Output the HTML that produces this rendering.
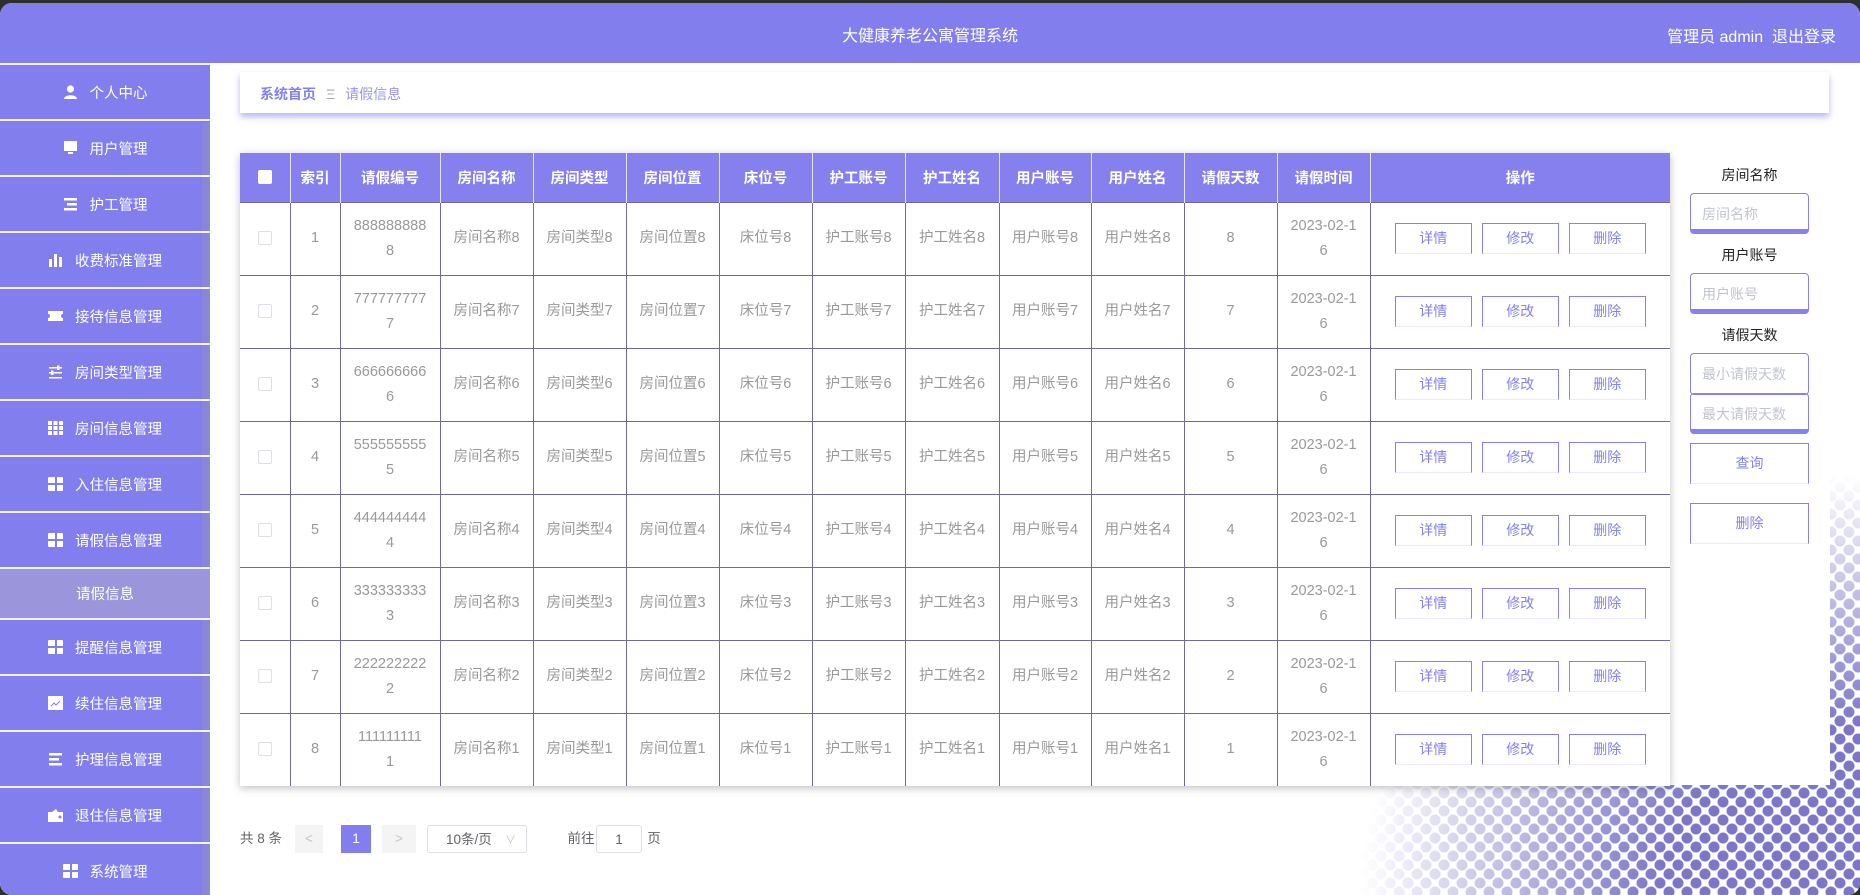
<!DOCTYPE html>
<html><head><meta charset="utf-8"><style>
*{box-sizing:border-box;margin:0;padding:0}
body{width:1860px;height:895px;background:#2e2e2e;font-family:"Liberation Sans","Noto Sans CJK SC",sans-serif;overflow:hidden;position:relative}
#page{position:absolute;left:0;top:3px;width:1860px;height:892px;background:#fff;border-radius:12px 12px 12px 12px;overflow:hidden}
#hdr{position:absolute;left:0;top:0;width:1860px;height:60px;background:#827eee;color:#fff}
#hdr .t{position:absolute;left:0;width:1860px;text-align:center;top:19px;font-size:16px}
#hdr .r{position:absolute;right:24px;top:20px;font-size:16px}
#side{position:absolute;left:0;top:60px;width:210px;height:832px;background:#827eee;border-radius:0 0 0 12px;overflow:hidden}
#side .strip{position:absolute;right:0;top:60px;width:8px;height:780px;background:#8a86d8}
.it{height:56px;border-top:2px solid #f4f3ff;color:#fff;font-size:14.5px;display:flex;align-items:center;justify-content:center;gap:12px;position:relative}
.it.act{background:#9b96dc}
.ic{width:15px;height:14px;display:inline-block;position:relative}
.g4{background:linear-gradient(#827eee,#827eee) 7px 0/2px 14px no-repeat,linear-gradient(#827eee,#827eee) 0 6px/15px 2px no-repeat,#fff;border-radius:1px}
#dots{position:absolute;right:0;bottom:0;width:560px;height:480px;
background:radial-gradient(circle,#7d76c8 0 5px,transparent 6px) 0 0/18px 18px,radial-gradient(circle,#7d76c8 0 5px,transparent 6px) 9px 9px/18px 18px;
-webkit-mask-image:radial-gradient(ellipse 500px 420px at 100% 100%,#000 40%,rgba(0,0,0,.5) 70%,transparent 100%);mask-image:radial-gradient(ellipse 500px 420px at 100% 100%,#000 40%,rgba(0,0,0,.5) 70%,transparent 100%)}
#white{position:absolute;left:210px;top:60px;width:1620px;height:722px;background:#fff}
#bc{position:absolute;left:240px;top:69px;width:1589px;height:41px;background:#fff;box-shadow:0 4px 6px rgba(130,126,238,.55);font-size:14px;padding:12px 20px;color:#8580ee}
#bc b{font-weight:bold}
#bc .sep{color:#aaa;margin:0 10px}
#bc .c{color:#9a95e8}
table{position:absolute;left:240px;top:150px;border-collapse:collapse;box-shadow:0 2px 8px rgba(0,0,0,.25);background:#fff;table-layout:fixed;width:1430px}
th{background:#8580ee;color:#fff;font-weight:bold;font-size:14.5px;height:49px;border-right:1.5px solid #e8e6ff;text-align:center}
td{height:73px;border:1px solid #6f6a9e;color:#999;font-size:14.5px;text-align:center;padding:0 8px;line-height:25px}
tr td:first-child{border-left:none}
tr:last-child td{border-bottom:none}
tr td:last-child{border-right:none;padding:0}
.cb{display:inline-block;width:14px;height:14px;border:1px solid #dcdfe6;border-radius:2px;background:#fff;vertical-align:middle}
th .cb{border:none;border-radius:2px}
.btn{display:inline-block;width:77px;height:31px;border:1.5px solid #8880f0;border-bottom-color:#ebe8ff;color:#8580ee;font-size:14px;line-height:28px;margin:0 5px;background:#fff}
.lb{position:absolute;width:119px;text-align:center;font-size:14px;color:#222}
.in{position:absolute;left:1690px;width:119px;height:41px;border:1.5px solid #8880f0;border-bottom:5px solid #8880f0;border-radius:4px;color:#c0c4cc;font-size:14px;padding:10px 11px}
.sb{position:absolute;left:1690px;width:119px;height:41px;border:1.5px solid #8880f0;border-bottom-color:#ebe8ff;color:#8580ee;font-size:14px;text-align:center;line-height:38px;background:#fff}
#pg{position:absolute;left:240px;top:822px;font-size:13.5px;color:#606266;height:28px}
#pg div{position:absolute;top:0;height:28px;line-height:28px;text-align:center}
</style></head><body>
<div id="page">
<div id="dots"></div>
<div id="white"></div>
<div id="hdr"><div class="t">大健康养老公寓管理系统</div><div class="r">管理员 admin&nbsp;&nbsp;退出登录</div></div>
<div id="side"><div class="strip"></div>
<div class="it"><svg class="ic" viewBox="0 0 15 14"><circle cx="7.5" cy="4" r="3.6" fill="#fff"/><path d="M1 14c0-5 13-5 13 0z" fill="#fff"/></svg>个人中心</div>
<div class="it"><svg class="ic" viewBox="0 0 15 14"><rect x="1" y="0" width="13" height="10" fill="#fff"/><rect x="5" y="11" width="5" height="2" fill="#fff"/></svg>用户管理</div>
<div class="it"><svg class="ic" viewBox="0 0 15 14"><rect x="1" y="1" width="13" height="2.5" fill="#fff"/><rect x="4" y="6" width="10" height="2.5" fill="#fff"/><rect x="1" y="11" width="13" height="2.5" fill="#fff"/></svg>护工管理</div>
<div class="it"><svg class="ic" viewBox="0 0 15 14"><rect x="1" y="6" width="3" height="8" fill="#fff"/><rect x="6" y="1" width="3" height="13" fill="#fff"/><rect x="11" y="4" width="3" height="10" fill="#fff"/></svg>收费标准管理</div>
<div class="it"><svg class="ic" viewBox="0 0 15 14"><path d="M0 2h15v3a2 2 0 000 4v3H0V9a2 2 0 000-4z" fill="#fff"/></svg>接待信息管理</div>
<div class="it"><svg class="ic" viewBox="0 0 15 14"><rect x="1" y="2" width="13" height="1.5" fill="#fff"/><rect x="1" y="7" width="13" height="1.5" fill="#fff"/><rect x="1" y="12" width="13" height="1.5" fill="#fff"/><rect x="9" y="0.5" width="2.5" height="4.5" fill="#fff"/><rect x="3" y="5.5" width="2.5" height="4.5" fill="#fff"/></svg>房间类型管理</div>
<div class="it"><svg class="ic" viewBox="0 0 15 14"><g fill="#fff"><rect x="0" y="0" width="4" height="4"/><rect x="5.5" y="0" width="4" height="4"/><rect x="11" y="0" width="4" height="4"/><rect x="0" y="5" width="4" height="4"/><rect x="5.5" y="5" width="4" height="4"/><rect x="11" y="5" width="4" height="4"/><rect x="0" y="10" width="4" height="4"/><rect x="5.5" y="10" width="4" height="4"/><rect x="11" y="10" width="4" height="4"/></g></svg>房间信息管理</div>
<div class="it"><span class="ic g4"></span>入住信息管理</div>
<div class="it"><span class="ic g4"></span>请假信息管理</div>
<div class="it act" style="height:51px">请假信息</div>
<div class="it"><span class="ic g4"></span>提醒信息管理</div>
<div class="it"><svg class="ic" viewBox="0 0 15 14"><rect x="0" y="0" width="15" height="14" fill="#fff"/><path d="M3 10l3-3 2 2 4-4" stroke="#827eee" stroke-width="1" fill="none"/></svg>续住信息管理</div>
<div class="it"><svg class="ic" viewBox="0 0 15 14"><rect x="1" y="1" width="13" height="2.5" fill="#fff"/><rect x="1" y="6" width="10" height="2.5" fill="#fff"/><rect x="1" y="11" width="13" height="2.5" fill="#fff"/></svg>护理信息管理</div>
<div class="it"><svg class="ic" viewBox="0 0 15 14"><path d="M0 4h15v10H0z" fill="#fff"/><path d="M4 4l4-3 2 3" fill="#fff"/><circle cx="12" cy="9" r="1.5" fill="#827eee"/></svg>退住信息管理</div>
<div class="it"><span class="ic g4"></span>系统管理</div>
</div>
<div id="bc"><b>系统首页</b><span class="sep">Ξ</span><span class="c">请假信息</span></div>
<table>
<colgroup><col style="width:50px"><col style="width:50px"><col style="width:100px"><col style="width:93px"><col style="width:93px"><col style="width:93px"><col style="width:93px"><col style="width:93px"><col style="width:94px"><col style="width:92px"><col style="width:93px"><col style="width:93px"><col style="width:93px"><col style="width:300px"></colgroup>
<tr><th><span class="cb"></span></th><th>索引</th><th>请假编号</th><th>房间名称</th><th>房间类型</th><th>房间位置</th><th>床位号</th><th>护工账号</th><th>护工姓名</th><th>用户账号</th><th>用户姓名</th><th>请假天数</th><th>请假时间</th><th style="border-right:none">操作</th></tr>
<tr><td><span class="cb"></span></td><td>1</td><td>888888888<br>8</td><td>房间名称8</td><td>房间类型8</td><td>房间位置8</td><td>床位号8</td><td>护工账号8</td><td>护工姓名8</td><td>用户账号8</td><td>用户姓名8</td><td>8</td><td>2023-02-1<br>6</td><td><span class="btn">详情</span><span class="btn">修改</span><span class="btn">删除</span></td></tr>
<tr><td><span class="cb"></span></td><td>2</td><td>777777777<br>7</td><td>房间名称7</td><td>房间类型7</td><td>房间位置7</td><td>床位号7</td><td>护工账号7</td><td>护工姓名7</td><td>用户账号7</td><td>用户姓名7</td><td>7</td><td>2023-02-1<br>6</td><td><span class="btn">详情</span><span class="btn">修改</span><span class="btn">删除</span></td></tr>
<tr><td><span class="cb"></span></td><td>3</td><td>666666666<br>6</td><td>房间名称6</td><td>房间类型6</td><td>房间位置6</td><td>床位号6</td><td>护工账号6</td><td>护工姓名6</td><td>用户账号6</td><td>用户姓名6</td><td>6</td><td>2023-02-1<br>6</td><td><span class="btn">详情</span><span class="btn">修改</span><span class="btn">删除</span></td></tr>
<tr><td><span class="cb"></span></td><td>4</td><td>555555555<br>5</td><td>房间名称5</td><td>房间类型5</td><td>房间位置5</td><td>床位号5</td><td>护工账号5</td><td>护工姓名5</td><td>用户账号5</td><td>用户姓名5</td><td>5</td><td>2023-02-1<br>6</td><td><span class="btn">详情</span><span class="btn">修改</span><span class="btn">删除</span></td></tr>
<tr><td><span class="cb"></span></td><td>5</td><td>444444444<br>4</td><td>房间名称4</td><td>房间类型4</td><td>房间位置4</td><td>床位号4</td><td>护工账号4</td><td>护工姓名4</td><td>用户账号4</td><td>用户姓名4</td><td>4</td><td>2023-02-1<br>6</td><td><span class="btn">详情</span><span class="btn">修改</span><span class="btn">删除</span></td></tr>
<tr><td><span class="cb"></span></td><td>6</td><td>333333333<br>3</td><td>房间名称3</td><td>房间类型3</td><td>房间位置3</td><td>床位号3</td><td>护工账号3</td><td>护工姓名3</td><td>用户账号3</td><td>用户姓名3</td><td>3</td><td>2023-02-1<br>6</td><td><span class="btn">详情</span><span class="btn">修改</span><span class="btn">删除</span></td></tr>
<tr><td><span class="cb"></span></td><td>7</td><td>222222222<br>2</td><td>房间名称2</td><td>房间类型2</td><td>房间位置2</td><td>床位号2</td><td>护工账号2</td><td>护工姓名2</td><td>用户账号2</td><td>用户姓名2</td><td>2</td><td>2023-02-1<br>6</td><td><span class="btn">详情</span><span class="btn">修改</span><span class="btn">删除</span></td></tr>
<tr><td><span class="cb"></span></td><td>8</td><td>111111111<br>1</td><td>房间名称1</td><td>房间类型1</td><td>房间位置1</td><td>床位号1</td><td>护工账号1</td><td>护工姓名1</td><td>用户账号1</td><td>用户姓名1</td><td>1</td><td>2023-02-1<br>6</td><td><span class="btn">详情</span><span class="btn">修改</span><span class="btn">删除</span></td></tr>
</table>
<div class="lb" style="left:1690px;top:162px">房间名称</div>
<div class="in" style="top:190px">房间名称</div>
<div class="lb" style="left:1690px;top:242px">用户账号</div>
<div class="in" style="top:270px">用户账号</div>
<div class="lb" style="left:1690px;top:322px">请假天数</div>
<div class="in" style="top:350px;height:42px;border-bottom-width:1.5px">最小请假天数</div>
<div class="in" style="top:390px">最大请假天数</div>
<div class="sb" style="top:440px">查询</div>
<div class="sb" style="top:500px">删除</div>
<div id="pg">
<div style="left:0;width:45px;text-align:left">共 8 条</div>
<div style="left:55px;width:28px;background:#f4f4f5;color:#c0c4cc">&lt;</div>
<div style="left:101px;width:30px;background:#827eee;color:#fff">1</div>
<div style="left:142px;width:34px;background:#f4f4f5;color:#c0c4cc">&gt;</div>
<div style="left:187px;width:100px;border:1px solid #dcdfe6;border-radius:3px;text-align:left;padding-left:18px;color:#606266">10条/页<span style="position:absolute;right:10px;color:#c0c4cc;font-size:11px">∨</span></div>
<div style="left:326px;width:30px">前往</div>
<div style="left:356px;width:46px;border:1px solid #dcdfe6;border-radius:3px">1</div>
<div style="left:406px;width:16px">页</div>
</div>
</div>
</body></html>
